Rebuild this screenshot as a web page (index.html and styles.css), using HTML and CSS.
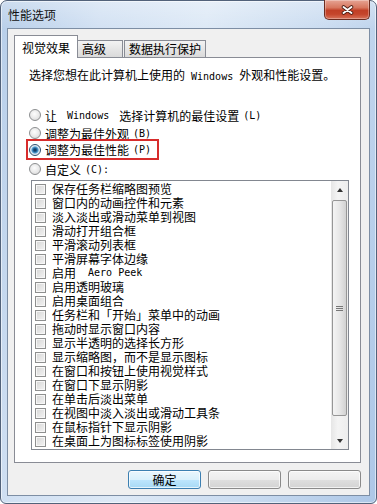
FILE: index.html
```html
<!DOCTYPE html>
<html lang="zh-CN">
<head>
    <meta charset="UTF-8">
    <meta name="viewport" content="width=device-width, initial-scale=1.0">
    <title>性能选项</title>
    <link rel="stylesheet" href="styles.css">
</head>
<body>
    <div class="window">
        <div class="titlebar">
            <span class="title">性能选项</span>
            <button class="close-btn" aria-label="关闭">
                <svg width="13" height="10" viewBox="0 0 13 10">
                    <path d="M2.5 2 L10.5 8 M10.5 2 L2.5 8" stroke="#4a1c12" stroke-width="3.6" stroke-linecap="round"/>
                    <path d="M2.5 2 L10.5 8 M10.5 2 L2.5 8" stroke="#fff" stroke-width="1.9" stroke-linecap="round"/>
                </svg>
            </button>
        </div>

        <div class="client">
            <div class="tabs">
                <div class="tab active">视觉效果</div>
                <div class="tab">高级</div>
                <div class="tab">数据执行保护</div>
            </div>

            <div class="tab-panel">
                <p class="intro">选择您想在此计算机上使用的<span class="lat"> Windows </span>外观和性能设置。</p>

                <div class="choices">
                    <div class="radio"><span class="dot"></span>让<span class="lat"> Windows </span>选择计算机的最佳设置<span class="lat">(L)</span></div>
                    <div class="radio"><span class="dot"></span>调整为最佳外观<span class="lat">(B)</span></div>
                    <div class="radio marked"><span class="dot checked"></span>调整为最佳性能<span class="lat">(P)</span></div>
                    <div class="radio"><span class="dot"></span>自定义<span class="lat">(C):</span></div>
                </div>

                <div class="listbox">
                    <ul class="effects">
                        <li><span class="check"></span>保存任务栏缩略图预览</li>
                        <li><span class="check"></span>窗口内的动画控件和元素</li>
                        <li><span class="check"></span>淡入淡出或滑动菜单到视图</li>
                        <li><span class="check"></span>滑动打开组合框</li>
                        <li><span class="check"></span>平滑滚动列表框</li>
                        <li><span class="check"></span>平滑屏幕字体边缘</li>
                        <li><span class="check"></span>启用<span class="lat"> Aero Peek</span></li>
                        <li><span class="check"></span>启用透明玻璃</li>
                        <li><span class="check"></span>启用桌面组合</li>
                        <li><span class="check"></span>任务栏和「开始」菜单中的动画</li>
                        <li><span class="check"></span>拖动时显示窗口内容</li>
                        <li><span class="check"></span>显示半透明的选择长方形</li>
                        <li><span class="check"></span>显示缩略图，而不是显示图标</li>
                        <li><span class="check"></span>在窗口和按钮上使用视觉样式</li>
                        <li><span class="check"></span>在窗口下显示阴影</li>
                        <li><span class="check"></span>在单击后淡出菜单</li>
                        <li><span class="check"></span>在视图中淡入淡出或滑动工具条</li>
                        <li><span class="check"></span>在鼠标指针下显示阴影</li>
                        <li><span class="check"></span>在桌面上为图标标签使用阴影</li>
                    </ul>
                    <div class="scrollbar">
                        <div class="sb-btn"><span class="arrow-up"></span></div>
                        <div class="sb-thumb"><span class="grip"></span></div>
                        <div class="sb-track"></div>
                        <div class="sb-btn"><span class="arrow-down"></span></div>
                    </div>
                </div>
            </div>

            <div class="buttons">
                <button class="btn default">确定</button>
                <button class="btn"></button>
                <button class="btn"></button>
            </div>
        </div>
    </div>
</body>
</html>
```

FILE: styles.css
```css
* {
    box-sizing: border-box;
}

body {
    margin: 0;
    background: #fff;
    font-family: "Noto Sans CJK SC", sans-serif;
    font-size: 12px;
    color: #000;
}

/* latin runs in the dialog font are half-width, monospace-like */
.lat {
    font-family: "DejaVu Sans Mono", monospace;
    font-size: 10px;
    white-space: pre;
}

.window {
    width: 377px;
    height: 504px;
    display: flex;
    flex-direction: column;
    padding: 0 6px 7px;
    border: 1px solid #52627a;
    border-radius: 7px 7px 6px 6px;
    background:
        linear-gradient(180deg, rgba(255, 255, 255, 0.3), rgba(255, 255, 255, 0) 28px),
        linear-gradient(100deg, #b7cee9 0%, #d2e1f3 22%, #dde9f6 45%, #c9dbf0 72%, #adc7e7 100%);
    box-shadow: inset 0 0 0 1px rgba(255, 255, 255, 0.55);
}

.titlebar {
    height: 27px;
    display: flex;
    justify-content: space-between;
    align-items: flex-start;
}

.title {
    margin: 6px 0 0 1px;
    line-height: 16px;
    color: #111;
}

.close-btn {
    width: 46px;
    height: 20px;
    margin-top: -1px;
    padding: 0;
    display: flex;
    align-items: center;
    justify-content: center;
    border: 1px solid #6b2c20;
    border-top: none;
    border-radius: 0 0 5px 5px;
    background: linear-gradient(180deg, #e6a494 0%, #d7775f 40%, #c13f26 55%, #c5452b 75%, #d8735a 100%);
    box-shadow: inset 0 0 0 1px rgba(255, 255, 255, 0.3);
}

.client {
    flex: 1;
    display: flex;
    flex-direction: column;
    padding: 0 8px 0 6px;
    background: #f0f0f0;
    border: 1px solid #7d8ea4;
}

/* tabs */
.tabs {
    display: flex;
    align-items: flex-end;
    margin-top: 6px;
    height: 22px;
}

.tab {
    height: 17px;
    padding: 0 4px;
    border: 1px solid #898c95;
    border-bottom: none;
    line-height: 16px;
    white-space: nowrap;
    background: linear-gradient(180deg, #f3f3f3, #e6e6e6 50%, #dadada);
}

.tab:nth-child(2) {
    width: 47px;
    padding-left: 5px;
    margin-right: 1px;
}

.tab.active {
    position: relative;
    z-index: 1;
    width: 64px;
    height: 23px;
    padding: 1px 0 0 7px;
    margin: 0 -2px -1px 0;
    line-height: 21px;
    background: #fff;
}

.tab-panel {
    height: 406px;
    padding: 9px 0 0 14px;
    background: #fff;
    border: 1px solid #898c95;
}

.intro {
    margin: 0;
    line-height: 16px;
}

.choices {
    display: flex;
    flex-direction: column;
    margin-top: 21px;
}

.radio {
    height: 18px;
    display: flex;
    align-items: center;
    gap: 4px;
    white-space: nowrap;
}

.radio.marked {
    align-self: flex-start;
    height: 21px;
    margin: -3px 0 0 -3px;
    padding: 0 6px 0 1px;
    border: 2px solid #d72c2c;
}

.dot {
    width: 12px;
    height: 12px;
    border-radius: 50%;
    border: 1px solid #8c8e90;
    background: radial-gradient(circle at 45% 40%, #fdfdfd 0, #e8e8e8 55%, #cfcfcf 100%);
}

.dot.checked {
    border-color: #2c4f6e;
    background: radial-gradient(circle at 50% 50%, #0d2c4d 0, #1f5f92 1.8px, #5aa8db 3.2px, #d8e6f1 4px, #f2f2f2 5.5px);
}

/* list of effects */
.listbox {
    display: flex;
    width: 318px;
    height: 270px;
    margin: 2px 0 0 2px;
    border: 1px solid #828790;
    background: #fff;
}

.effects {
    flex: 1;
    list-style: none;
    margin: 0;
    padding: 1px 0 0 3px;
    overflow: hidden;
}

.effects li {
    height: 14px;
    display: flex;
    align-items: center;
    gap: 6px;
    line-height: 14px;
    white-space: nowrap;
}

.check {
    flex: none;
    width: 11px;
    height: 11px;
    border: 1px solid #8e8f8f;
    background: linear-gradient(135deg, #d6d6d6, #f3f3f3);
    box-shadow: inset 0 0 0 1px #f7f7f7;
}

.scrollbar {
    width: 17px;
    display: flex;
    flex-direction: column;
    background: linear-gradient(90deg, #e6e6e6, #f4f4f4 40%, #ededed);
}

.sb-btn {
    height: 17px;
    display: flex;
    align-items: center;
    justify-content: center;
}

.arrow-up {
    border: 3.5px solid transparent;
    border-top: none;
    border-bottom: 4px solid #333;
}

.arrow-down {
    border: 3.5px solid transparent;
    border-bottom: none;
    border-top: 4px solid #333;
}

.sb-thumb {
    height: 216px;
    margin: 2px 1px 0;
    display: flex;
    align-items: center;
    justify-content: center;
    border: 1px solid #969696;
    border-radius: 2px;
    background: linear-gradient(90deg, #f4f4f4, #e7e7e7 50%, #d2d2d2);
}

.grip {
    width: 7px;
    height: 5px;
    border-top: 1px solid #777;
    border-bottom: 1px solid #777;
    background: linear-gradient(180deg, transparent 1px, #777 1px, #777 2px, transparent 2px);
}

.sb-track {
    flex: 1;
}

/* dialog buttons */
.buttons {
    display: flex;
    justify-content: flex-end;
    gap: 7px;
    margin-top: 7px;
}

.btn {
    width: 73px;
    height: 19px;
    padding: 0;
    font-family: "Noto Sans CJK SC", sans-serif;
    font-size: 12px;
    line-height: 16px;
    color: #000;
    border: 1px solid #8a8a8a;
    border-radius: 3px;
    background: linear-gradient(180deg, #f4f4f4, #ececec 50%, #dfdfdf 50%, #d3d3d3);
    box-shadow: inset 0 0 0 1px rgba(255, 255, 255, 0.7);
}

.btn.default {
    border-color: #3c7fb1;
    background: linear-gradient(180deg, #eaf6fd, #d9f0fc 50%, #bee6fd 50%, #a7d9f5);
}
```
